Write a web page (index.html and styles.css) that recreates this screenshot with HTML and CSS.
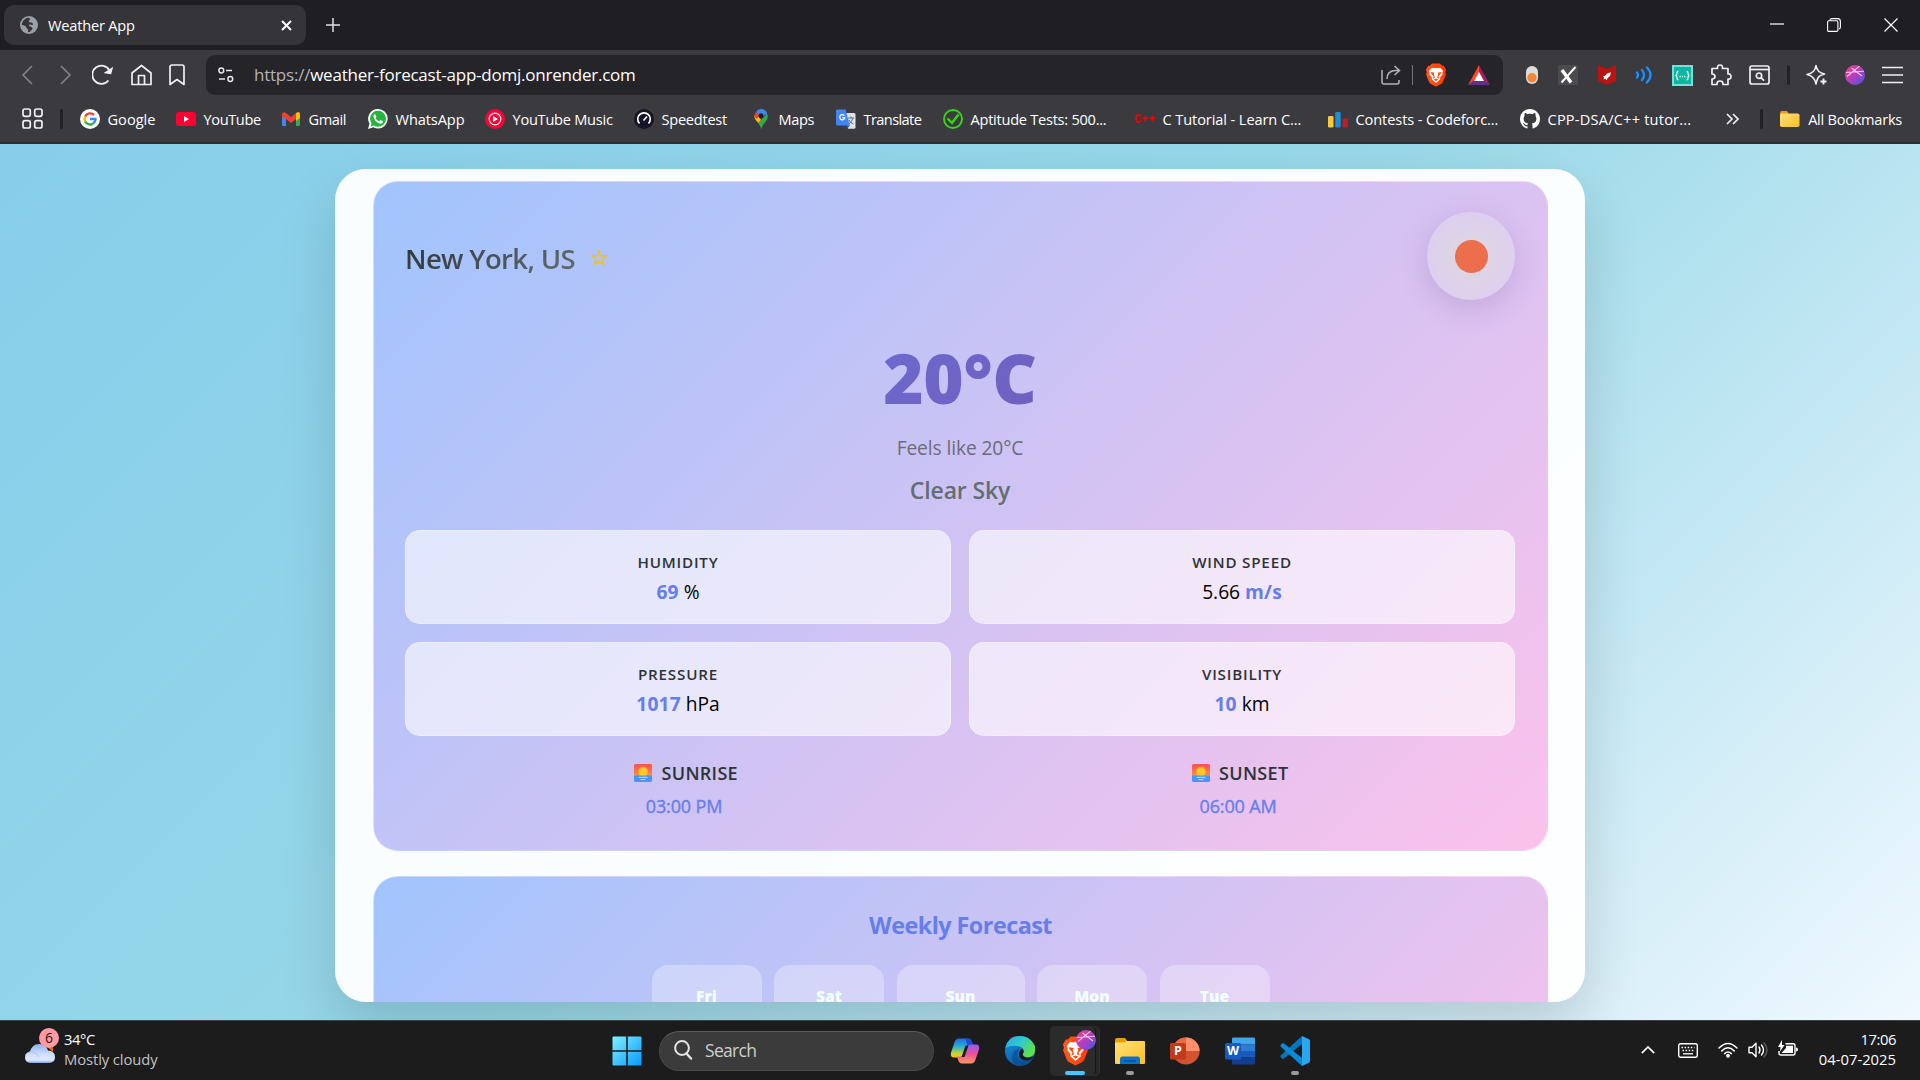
FILE: index.html
```html
<!DOCTYPE html>
<html lang="en">
<head>
<meta charset="utf-8">
<title>Weather App</title>
<link rel="stylesheet" href="styles.css">
</head>
<body>
<svg class="defs" width="0" height="0" aria-hidden="true">
  <defs>
    <linearGradient id="ball" x1="0" y1="0" x2="1" y2="1"><stop offset="0" stop-color="#f0407c"/><stop offset=".5" stop-color="#b43ec0"/><stop offset="1" stop-color="#3d5be0"/></linearGradient>
    <linearGradient id="lion-bg" x1="0" y1="0" x2="1" y2="0"><stop offset="0" stop-color="#ff5a1c"/><stop offset="1" stop-color="#ff3b06"/></linearGradient>
    <linearGradient id="win" x1="0" y1="0" x2="1" y2="1"><stop offset="0" stop-color="#7df3ff"/><stop offset="1" stop-color="#0a95ff"/></linearGradient>
    <linearGradient id="folder" x1="0" y1="0" x2="1" y2="1"><stop offset="0" stop-color="#ffe07a"/><stop offset="1" stop-color="#fcc021"/></linearGradient>
    <linearGradient id="cop1" x1="0" y1="0" x2="0" y2="1"><stop offset="0" stop-color="#1a6be8"/><stop offset=".45" stop-color="#2fb5c8"/><stop offset=".8" stop-color="#c8d42a"/><stop offset="1" stop-color="#ffc21a"/></linearGradient>
    <linearGradient id="cop2" x1="0" y1="0" x2="0" y2="1"><stop offset="0" stop-color="#8e5cf5"/><stop offset=".5" stop-color="#ee4f9c"/><stop offset="1" stop-color="#ff9a5c"/></linearGradient>
    <linearGradient id="edge1" x1="0" y1="0" x2="1" y2=".6"><stop offset="0" stop-color="#2aa8e6"/><stop offset=".5" stop-color="#30c9cf"/><stop offset="1" stop-color="#62e23e"/></linearGradient>
    <linearGradient id="edge2" x1="0" y1="0" x2=".6" y2="1"><stop offset="0" stop-color="#1795e0"/><stop offset="1" stop-color="#0d52a0"/></linearGradient>
    <linearGradient id="cloud" x1="0" y1="0" x2="0" y2="1"><stop offset="0" stop-color="#8fb2f0"/><stop offset=".55" stop-color="#cfe0fb"/><stop offset=".85" stop-color="#dce9fd"/><stop offset="1" stop-color="#7fa3e6"/></linearGradient>
    <linearGradient id="dawn" x1="0" y1="0" x2="0" y2="1"><stop offset="0" stop-color="#fb4f4f"/><stop offset=".6" stop-color="#f98a44"/></linearGradient>
    <symbol id="lion" viewBox="0 0 26 30">
      <path fill="url(#lion-bg)" d="M8 0h10l3 3h2l3 5-1 4 1 2-4 10q-1 2-3 3l-6 3-6-3q-2-1-3-3L0 14l1-2-1-4 3-5h2z"/>
      <path fill="#fff" d="M7.500 5.500l3 .7 2.500-.7 2.500.7 3-.7 3.700 4.300-1 2.700.3 1.500-3.300 4.500.3 2L13 25.500 7.500 20.500l.3-2L4.500 14l.3-1.500-1-2.700z"/>
      <path fill="#ff4c12" d="M6 11l5 1-.8 1.800 1.300 4.700-2.700 1.500 1-3.500-3-3zM20 11l-5 1 .8 1.800-1.300 4.700 2.700 1.500-1-3.500 3-3zM10.300 20.800L13 19.600l2.700 1.200L13 23z"/>
    </symbol>
    <symbol id="avatar" viewBox="0 0 20 20">
      <circle cx="10" cy="10" r="10" fill="url(#ball)"/>
      <path d="M0.800 7.500L19 6.300M2 11.500L14.500 1.200M6.500 3l10.500 8" stroke="#f6c3ea" stroke-width="1.100" fill="none"/>
    </symbol>
    <symbol id="sunrise" viewBox="0 0 18 18">
      <rect width="18" height="18" rx="1.800" fill="url(#dawn)"/>
      <path d="M9 2.200l1.100 1.100 1.500-.5.6 1.500 1.500.6-.3 1.600 1 1.300-.9 1.500.2 2H4.300l.2-2-.9-1.500 1-1.300-.3-1.600 1.500-.6.6-1.500 1.500.5z" fill="#ff9f2e"/>
      <circle cx="9" cy="8" r="4.400" fill="#ffc928"/>
      <path d="M0 11.500h18v4.700q0 1.800-1.800 1.800H1.800Q0 18 0 16.200z" fill="#4a93f8"/>
      <path d="M4.500 13.300h9M6.500 15.600h5" stroke="#dfe0ff" stroke-width=".9"/>
    </symbol>
  </defs>
</svg>

<header class="tabs">
  <div class="tab">
    <svg width="18" height="18" viewBox="0 0 18 18"><circle cx="9" cy="9" r="9" fill="#9aa0a6"/><path fill="#35343a" d="M8 1.800C4.500 2.500 2 5.500 1.800 9c1 .3 2.700.2 3.700 1.200 1 .9.700 2 1.700 2.500.8.500 1.300 1.200.8 3.200l2 .2c.3-1.600 2.500-1.800 2.500-3.600 0-1.500-2-1.700-3-2.200-.9-.5-.7-1.600.3-1.800 1.300-.3 1.600.9 2.700.5 1-.4.500-1.800-.5-2.300-.9-.4-2.600.2-3-.9C8.700 4.700 10 4.300 9.800 3 9.700 2.200 9 1.700 8 1.800z"/></svg>
    <span class="tab-title">Weather App</span>
    <svg width="11" height="11" viewBox="0 0 11 11"><path d="M1 1l9 9M10 1l-9 9" stroke="#fff" stroke-width="1.900"/></svg>
  </div>
  <svg class="new-tab" width="14" height="14" viewBox="0 0 14 14"><path d="M7 0v14M0 7h14" stroke="#dedee0" stroke-width="1.500"/></svg>
  <div class="window-buttons">
    <svg width="14" height="14" viewBox="0 0 14 14"><path d="M0 6h14" stroke="#fff" stroke-width="1.200"/></svg>
    <svg width="14" height="14" viewBox="0 0 14 14" fill="none" stroke="#fff" stroke-width="1.100"><rect x=".6" y="2.800" width="10.300" height="10.600" rx="1.200"/><path d="M3 2.600Q3 .6 5 .6h5.500q2.900 0 2.900 2.900V9q0 1.600-1.500 2"/></svg>
    <svg width="14" height="14" viewBox="0 0 14 14"><path d="M.5.5l13 13M13.500.5l-13 13" stroke="#fff" stroke-width="1.200"/></svg>
  </div>
</header>

<nav class="toolbar">
  <div class="nav-buttons">
    <svg width="20" height="22" viewBox="0 0 20 22" fill="none" stroke="#84838a" stroke-width="1.600"><path d="M13 2L4 11l9 9"/></svg>
    <svg width="20" height="22" viewBox="0 0 20 22" fill="none" stroke="#84838a" stroke-width="1.600"><path d="M5 2l9 9-9 9"/></svg>
    <svg width="22" height="22" viewBox="0 0 22 22" fill="none" stroke="#f0f0f2" stroke-width="1.800"><path d="M16.500 16.500A9.100 9.100 0 1 1 17.500 6.500"/><path d="M14 8.500l4.500.8 1.200-4.600z" fill="#f0f0f2"/></svg>
    <svg width="22" height="22" viewBox="1 0 22 22" fill="none" stroke="#f0f0f2" stroke-width="1.700" stroke-linejoin="round"><path d="M2 9l9.500-7.500L21 9v11.500H2z"/><path d="M8.500 20v-8.500h6V20"/></svg>
    <svg width="16" height="22" viewBox="0 0 16 22" fill="none" stroke="#f0f0f2" stroke-width="1.700" stroke-linejoin="round"><path d="M1 3q0-2 2-2h10q2 0 2 2v17.500l-7-5-7 5z"/></svg>
  </div>
  <div class="address">
    <svg width="16" height="16" viewBox="0 0 16 16" fill="none" stroke="#e8e8ea" stroke-width="1.500"><circle cx="3.300" cy="3.500" r="2.400"/><path d="M8 3.500h6M1 12h6"/><circle cx="12.300" cy="12" r="2.400"/></svg>
    <span class="url"><span class="scheme">https://</span>weather-forecast-app-domj.onrender.com</span>
    <svg class="share" width="20" height="20" viewBox="0 0 20 20" fill="none" stroke="#b4b4b8" stroke-width="1.500"><path d="M1 5v12q0 2 2 2h13q2 0 2-2v-2"/><path d="M6 14q0-8 8-8.500h4M13.500 1l5 4.500-5 4.500"/></svg>
    <i class="rule"></i>
    <svg class="shield" width="20" height="24"><use href="#lion"/></svg>
    <svg width="22" height="20" viewBox="0 0 22 20"><path fill="#ff4724" d="M11 0L0 20l11-7z"/><path fill="#9e1f63" d="M11 0l11 20-11-7z"/><path fill="#662d91" d="M0 20l6-5h10l6 5z"/><path fill="#fff" d="M11 7l5 9H6z"/></svg>
  </div>
  <div class="extensions">
    <svg width="12" height="18" viewBox="0 0 12 18"><rect width="12" height="18" rx="6" fill="#dcdcdc"/><circle cx="6" cy="11.800" r="4.700" fill="#f58634"/></svg>
    <svg width="20" height="20" viewBox="0 0 20 20"><rect width="20" height="20" fill="#4b4b4d"/><path d="M4 5l9 12.500" stroke="#fff" stroke-width="3.400"/><path d="M17.500 2L3.500 17.500" stroke="#fff" stroke-width="1.900"/></svg>
    <svg width="18" height="20" viewBox="0 0 18 20"><path fill="#b81414" d="M0 0l9 4 9-4v16l-9 4-9-4z"/><path fill="#fff" d="M13 7.500q-4 0-5.500 3l-2.500 1 1.200 1L5.500 14.500l2.200-.8 1 1.500 1-2.200q3-1.700 3.300-5.500z"/></svg>
    <svg width="17" height="20" viewBox="0 0 17 20" fill="none" stroke="#1a90ff" stroke-width="2.300" stroke-linecap="round"><path d="M2 7.500q2 2.500 0 5M7 5q4 5 0 10M12 2.500q7 7.500 0 15"/></svg>
    <svg width="21" height="21" viewBox="0 0 21 21"><rect x="1" y="1" width="19" height="19" fill="#0fb5a2" stroke="#6fe3d5" stroke-width="2"/><path d="M6.500 6q-1.500 0-1.500 2t-1 2.500q1 .5 1 2.500t1.500 2M14.500 6q1.500 0 1.500 2t1 2.500q-1 .5-1 2.500t-1.500 2" fill="none" stroke="#fff" stroke-width="1.200"/><path d="M7.500 11.500h1.200m1.200 0h1.200m1.200 0h1.200" stroke="#fff" stroke-width="1.300"/></svg>
    <svg width="22" height="22" viewBox="0 0 22 22" fill="none" stroke="#f0f0f2" stroke-width="1.700" stroke-linejoin="round"><path d="M2 4.500h5.500Q7 1 10 1t2.500 3.500H18V10q3-.5 3 2.500T18 15v5.500h-5q.3-3.500-3-3.500t-3 3.500H2V15q3 0 3-2.500T2 10z"/></svg>
    <svg width="21" height="20" viewBox="0 0 21 20" fill="none" stroke="#f0f0f2" stroke-width="1.700"><rect x="1" y="1" width="19" height="18" rx="2"/><path d="M1 4.500h19"/><circle cx="10" cy="10.700" r="2.700"/><path d="M12 12.700l3 3"/></svg>
    <i class="rule dark"></i>
    <svg width="22" height="22" viewBox="0 0 22 22" fill="none" stroke="#f0f0f2" stroke-width="1.600" stroke-linejoin="round"><path d="M10 1.500q1 7 8.500 8.500-5.500 1.500-6.500 4-1.200 2-2 6-1.500-8-9-9.500 8-1.500 9-9z"/><path d="M17.500 14.500v6M14.500 17.500h6" stroke-width="1.900"/></svg>
    <svg width="20" height="20"><use href="#avatar"/></svg>
    <svg width="21" height="18" viewBox="0 0 21 18"><path d="M0 1.500h21M0 9h21M0 16.500h21" stroke="#f0f0f2" stroke-width="1.600"/></svg>
  </div>
</nav>

<nav class="bookmarks">
  <svg class="apps" width="21" height="21" viewBox="0 0 21 21" fill="none" stroke="#f0f0f2" stroke-width="1.700"><rect x="1" y="1" width="7.300" height="7.300" rx="2"/><rect x="12.700" y="1" width="7.300" height="7.300" rx="2"/><rect x="1" y="12.700" width="7.300" height="7.300" rx="2"/><rect x="12.700" y="12.700" width="7.300" height="7.300" rx="2"/></svg>
  <i class="rule dark"></i>
  <div class="links">
    <a class="bm"><svg width="20" height="20" viewBox="0 0 20 20" fill="none" stroke-width="2.400"><circle cx="10" cy="10" r="10" fill="#fff"/><path stroke="#ea4335" d="M5.200 7.500a5.500 5.500 0 0 1 8.800-1.600"/><path stroke="#fbbc05" d="M5.200 12.500a5.500 5.500 0 0 1 0-5"/><path stroke="#34a853" d="M13.600 14.200a5.500 5.500 0 0 1-8.400-1.700"/><path stroke="#4285f4" d="M10 10h5.500q0 2.600-1.900 4.200"/></svg>Google</a>
    <a class="bm tight3"><svg width="20" height="20" viewBox="0 0 20 20"><rect y="3" width="20" height="14" rx="3" fill="#ff0033"/><path d="M8 7l5 3-5 3z" fill="#fff"/></svg>YouTube</a>
    <a class="bm tight3"><svg width="20" height="20" viewBox="0 0 20 20"><path fill="#4285f4" d="M1 5h4v12H2q-1 0-1-1z"/><path fill="#34a853" d="M15 9h4v7q0 1-1 1h-3z"/><path fill="#fbbc04" d="M15 4l2-1q2 0 2 2v4l-4 3z"/><path fill="#ea4335" d="M1 5q1-3 4-1l5 4 5-4v6l-5 4-5-4-4-2z"/></svg>Gmail</a>
    <a class="bm tight1"><svg width="20" height="20" viewBox="0 0 20 20"><path fill="#fff" d="M10 0a9.700 9.700 0 0 1 0 19.500q-2.500 0-4.500-1.200L0 20l1.500-5.400A9.700 9.700 0 0 1 10 0z"/><path fill="#25b53e" d="M10 1.800a8 8 0 0 1 0 16q-2.300 0-4.200-1.300l-3.200 1 .9-3.200A8 8 0 0 1 10 1.800z"/><path fill="#fff" d="M7 5q-1.800.8-1.500 2.700 1 5 6.500 7 2.300.3 3-1.700v-.8L12.500 11l-1.300 1.500Q8.800 11.600 7.500 9l.9-1.300z"/></svg>WhatsApp</a>
    <a class="bm tight2"><svg width="20" height="20" viewBox="0 0 20 20"><circle cx="10" cy="10" r="10" fill="#ff0033"/><circle cx="10" cy="10" r="5.800" fill="none" stroke="#fff" stroke-width="1.200"/><path d="M8 7l5 3-5 3z" fill="#fff"/></svg>YouTube Music</a>
    <a class="bm tight2"><svg width="20" height="20" viewBox="0 0 20 20"><circle cx="10" cy="10" r="10" fill="#141526"/><path d="M5.500 14.500a6.300 6.300 0 1 1 9 0" fill="none" stroke="#fff" stroke-width="1.700"/><path d="M9.500 11.500l3.500-4" stroke="#fff" stroke-width="1.600"/></svg>Speedtest</a>
    <a class="bm tight3"><svg width="20" height="20" viewBox="0 0 20 20"><path fill="#34a853" d="M10 20q-.7-3.500-2.800-6L16 4.500q2 4.500-1.500 8.500-3 3-4.500 7z"/><path fill="#fbbc04" d="M7.400 14Q3 10 3.300 6.500L7.800 8l2.200 2.800z"/><path fill="#ea4335" d="M3.400 6.500q.3-2 1.600-3.600L9 6 5.500 10q-2-2-2.100-3.500z"/><path fill="#4285f4" d="M5 2.900Q7-.2 10.500 0 14.800.3 16.200 4.600L11 8z"/><circle cx="10" cy="6.700" r="2.400" fill="#202124"/></svg>Maps</a>
    <a class="bm tight4"><svg width="20" height="20" viewBox="0 0 20 20"><path fill="#dfe2e6" d="M8 4h10q1.500 0 1.500 1.500v12.800q0 1.500-1.500 1.500h-6z"/><path d="M12 9h6m-3-1.500V9m2 0q-1 4-4.500 6m.5-4q1.500 3 4.500 4" stroke="#55707e" fill="none"/><path fill="#4285f4" d="M1.500.5h8l4.500 16H1.500Q0 16.500 0 15V2Q0 .5 1.500.5z"/><path d="M8.300 6.500a2.600 2.600 0 1 0 .6 2.200H6.500" stroke="#fff" stroke-width="1.200" fill="none"/><path fill="#2456b8" d="M10 16.500h4l-3 3.300z"/></svg>Translate</a>
    <a class="bm tight2"><svg width="20" height="20" viewBox="0 0 20 20" fill="none" stroke="#36d813"><circle cx="10" cy="10" r="9" stroke-width="1.900"/><path d="M4.500 9.500L9 14l6.500-8.500" stroke-width="2.400"/></svg>Aptitude Tests: 500...</a>
    <a class="bm tight1"><svg width="20" height="20" viewBox="0 0 20 20" fill="none" stroke="#f00505" stroke-width="1.600"><path d="M6 7.500Q5.500 5.800 3.500 5.800 1 5.800 1 9.500t2.500 3.600q2 0 2.500-1.600M7.500 9.300h5.500M10.200 6.300v6M14.500 9.300H20M17.200 6.300v6"/></svg>C Tutorial - Learn C...</a>
    <a class="bm tight1"><svg width="20" height="20" viewBox="0 0 20 20"><rect y="7" width="5.500" height="11.500" rx="1.300" fill="#f8c840"/><rect x="7.200" y="3" width="5.500" height="15.500" rx="1.300" fill="#1f8ed0"/><rect x="14.400" y="9.500" width="5.500" height="9" rx="1.300" fill="#b81f2a"/></svg>Contests - Codeforc...</a>
    <a class="bm wide"><svg width="20" height="20" viewBox="0 0 16 16"><path fill="#fff" d="M8 0C3.580 0 0 3.580 0 8c0 3.540 2.290 6.530 5.470 7.590.4.070.55-.17.55-.38 0-.19-.01-.82-.01-1.490-2.010.37-2.530-.49-2.690-.94-.09-.23-.48-.94-.82-1.130-.28-.15-.68-.52-.01-.53.630-.01 1.080.58 1.230.82.720 1.210 1.870.87 2.330.66.070-.52.280-.87.510-1.070-1.780-.2-3.640-.89-3.640-3.950 0-.87.310-1.590.82-2.150-.08-.2-.36-1.020.08-2.120 0 0 .67-.21 2.200.82.640-.18 1.320-.27 2-.27s1.360.09 2 .27c1.530-1.040 2.200-.82 2.200-.82.440 1.100.160 1.920.080 2.120.51.560.82 1.270.82 2.150 0 3.070-1.870 3.750-3.650 3.950.29.250.54.730.54 1.480 0 1.070-.01 1.930-.01 2.200 0 .21.150.46.550.38A8.010 8.010 0 0 0 16 8c0-4.420-3.580-8-8-8z"/></svg>CPP-DSA/C++ tutor...</a>
  </div>
  <svg width="13" height="12" viewBox="0 0 13 12" fill="none" stroke="#f0f0f2" stroke-width="1.700"><path d="M1 1l5 5-5 5M7 1l5 5-5 5"/></svg>
  <i class="rule dark late"></i>
  <a class="bm tight2"><svg width="20" height="20" viewBox="0 0 20 20"><path fill="#e0a21c" d="M0 4q0-2 2-2h5l2 3h9v5H0z"/><rect y="4.500" width="19.500" height="13.500" rx="1.800" fill="url(#folder)"/></svg>All Bookmarks</a>
</nav>

<main class="page">
  <div class="shell">
    <section class="card current">
      <div class="card-head">
        <h2 class="city">New York, US</h2>
        <svg class="star" width="18" height="18" viewBox="0 0 18 18" fill="none" stroke="#f1c40f" stroke-width="1.400"><path d="M9 1.800l1.800 5h5.300L12 10.200l1.500 5.300L9 12.300l-4.500 3.200L6 10.200 1.900 6.800h5.300z"/></svg>
        <div class="sun"><i class="sun-disc"></i></div>
      </div>
      <div class="temp">20°C</div>
      <div class="feels">Feels like 20°C</div>
      <div class="sky">Clear Sky</div>
      <div class="stats">
        <div class="stat"><div class="label">HUMIDITY</div><div class="value"><b>69</b> %</div></div>
        <div class="stat"><div class="label">WIND SPEED</div><div class="value">5.66 <b>m/s</b></div></div>
        <div class="stat"><div class="label">PRESSURE</div><div class="value"><b>1017</b> hPa</div></div>
        <div class="stat"><div class="label">VISIBILITY</div><div class="value"><b>10</b> km</div></div>
      </div>
      <div class="suns">
        <div><div class="sun-label"><svg width="18" height="18"><use href="#sunrise"/></svg>SUNRISE</div><div class="sun-time">03:00 PM</div></div>
        <div><div class="sun-label"><svg width="18" height="18"><use href="#sunrise"/></svg>SUNSET</div><div class="sun-time">06:00 AM</div></div>
      </div>
    </section>
    <section class="card week">
      <h3 class="week-title">Weekly Forecast</h3>
      <div class="days">
        <div class="day">Fri</div><div class="day">Sat</div><div class="day broad">Sun</div><div class="day">Mon</div><div class="day">Tue</div>
      </div>
    </section>
  </div>
</main>

<footer class="taskbar">
  <div class="weather-widget">
    <div class="widget-icon">
      <svg width="32" height="22" viewBox="0 0 32 22"><path d="M22 3h7v6z" fill="#f7630c"/><path d="M8 20q-7 0-7-5.500Q1 9.500 6 9q2-8.500 10-8 6 .5 8 6.500 7 .5 7 6.500 0 6-7 6z" fill="url(#cloud)"/><path d="M1.500 12Q5 7 10 9.500q4 2 5 4" fill="none" stroke="#a9c3f3" stroke-width="1"/></svg>
      <span class="count">6</span>
    </div>
    <div class="two-lines"><span class="line-a">34°C</span><span class="line-b">Mostly cloudy</span></div>
  </div>
  <div class="dock">
    <svg class="start" width="30" height="30" viewBox="0 0 30 30" fill="url(#win)"><path d="M1.500.500H14.200V14.200H.500V1.500q0-1 1-1zM15.800.500H28.500q1 0 1 1V14.200H15.800zM.500 15.800H14.200V29.500H1.500q-1 0-1-1zM15.800 15.800H29.500V28.500q0 1-1 1H15.800z"/></svg>
    <div class="search"><svg width="19" height="20" viewBox="0 0 19 20" fill="none" stroke="#e4e4e4" stroke-width="2"><circle cx="8" cy="8" r="6.900"/><path d="M12.500 13.500l4.500 5" stroke-width="2.400" stroke-linecap="round"/></svg>Search</div>
    <div class="app"><svg width="30" height="28" viewBox="0 0 30 28"><path fill="url(#cop1)" d="M9 1.500h9q3 0 4 4l1 3h-5q-2 0-3 3l-2 6q-1 3-4 3H4q-4 0-3-5L4.500 5.500q1-4 4.500-4z"/><path fill="#2048d8" d="M15.500 1.500H18q3 0 4 4l1 3h-5q-1.500-1-2.500-7z"/><path fill="url(#cop2)" d="M21 26.500h-9q-3 0-4-4l-1-3h5q2 0 3-3l2-6q1-3 4-3h5q4 0 3 5l-3.500 10q-1 4-4.500 4z"/><path fill="#1c1c1c" d="M15.500 8.500h3L14.500 20h-3z"/></svg></div>
    <div class="app"><svg width="30" height="30" viewBox="0 0 30 30"><circle cx="15" cy="15" r="15" fill="url(#edge2)"/><path fill="url(#edge1)" d="M.300 12Q2.500 0 15 0q8 0 12.500 6T30 15q-.5 5-5.500 6t-6.500-2q-1-1.500 0-3 1.500-3-2-5Q8 8 .300 12z"/><path fill="#1c1c1c" d="M17.500 19q2 3.500 7.500 2.500l4-1q-3 4.500-9 4-7-1.500-6-7.500.7-3 3.500-4.500 2 2.500 1 4.500-.8 1-1 2z"/><path fill="#0b4c92" opacity=".65" d="M12.500 18q-1 7 7.500 7.500 4 0 7-2-4 6.500-12 6.500-8-2-8-9 0-7 8-8.500-2.300 2.500-2.500 5.500z"/></svg></div>
    <div class="app brave"><svg width="25" height="30"><use href="#lion"/></svg><svg class="badge" width="20" height="20"><use href="#avatar"/></svg><i class="mark on"></i></div>
    <div class="app"><svg width="30" height="28" viewBox="0 0 30 28"><path fill="#e6a100" d="M0 3q0-2 2-2h8l3 4v3H0z"/><rect y="4" width="30" height="23" rx="1" fill="url(#folder)"/><path fill="#e6a100" d="M0 5.500V3h12l-2 2.500z"/><path fill="#0f6fc4" d="M5 27v-5q0-2.500 2.500-2.500h15q2.500 0 2.500 2.500v5z"/><path d="M9 24h12" stroke="#0a4c94" stroke-width="1.400"/></svg><i class="mark"></i></div>
    <div class="app"><svg width="30" height="28" viewBox="0 0 30 28"><circle cx="16" cy="14" r="13.600" fill="#d35230"/><path fill="#ff8f6b" d="M16 .400A13.600 13.600 0 0 1 29.600 14H16z"/><path fill="#ed6c47" d="M16 .400A13.600 13.600 0 0 0 2.400 14H16z"/><rect y="6" width="16" height="16.500" rx="1.500" fill="#c13b1b"/></svg><span class="letter">P</span></div>
    <div class="app"><svg width="30" height="28" viewBox="0 0 30 28"><path fill="#41a5ee" d="M7 1.500Q7 .5 8 .5h21q1 0 1 1V7.500H7z"/><path fill="#2b7cd3" d="M7 7.500h23V14H7z"/><path fill="#185abd" d="M7 14h23v6.500H7z"/><path fill="#103f91" d="M7 20.500h23v6q0 1-1 1H8q-1 0-1-1z"/><rect y="6" width="16" height="16.500" rx="1.500" fill="#185abd"/></svg><span class="letter">W</span></div>
    <div class="app"><svg width="30" height="30" viewBox="0 0 30 30"><path fill="#0076bd" d="M.500 19.500L22 0v8L4 22.500q-1 .8-2 0L.500 21z"/><path fill="#0a8ad6" d="M.500 10.500L22 30v-8L4 7.500q-1-.8-2 0L.500 9z"/><path fill="#28a8f4" d="M22 0l7 3.200q1 .5 1 1.800v20q0 1.300-1 1.800L22 30z"/></svg><i class="mark"></i></div>
  </div>
  <div class="tray">
    <svg width="14" height="8" viewBox="0 0 14 8" fill="none" stroke="#fff" stroke-width="1.700"><path d="M.8 7.200L7 1l6.200 6.200"/></svg>
    <svg class="kbd" width="20" height="15" viewBox="0 0 20 15" fill="none" stroke="#fff"><rect x=".7" y=".7" width="18.600" height="13.600" rx="2" stroke-width="1.400"/><path d="M3.500 4.500h13M4.500 7.500h11" stroke-width="1.500" stroke-dasharray="1.500 1.600"/><path d="M5 10.800h10" stroke-width="1.300"/></svg>
    <svg class="wifi" width="20" height="16" viewBox="0 0 20 16" fill="none" stroke="#fff" stroke-width="1.500" stroke-linecap="round"><path d="M1 6q9-9 18 0M3.800 8.900q6.200-6.200 12.400 0M6.600 11.600q3.400-3.300 6.800 0"/><circle cx="10" cy="13.800" r="1.200" fill="#fff"/></svg>
    <svg class="vol" width="20" height="18" viewBox="0 0 20 18" fill="none" stroke="#fff" stroke-width="1.400" stroke-linejoin="round" stroke-linecap="round"><path d="M1 6.300h3l4-4v13.400l-4-4H1z"/><path d="M11 6q2 3 0 6M13.500 4q4 5 0 10"/><path d="M16 2q6 7 0 14" stroke="#5c5c5c"/></svg>
    <svg class="bat" width="20" height="17" viewBox="0 0 20 17"><path d="M7.500 3.800H15q2 0 2 2V13q0 2-2 2H3q-2 0-2-2v-2" fill="none" stroke="#fff" stroke-width="1.400"/><path d="M8 5.800h7V13H3.500L8 8z" fill="#fff"/><path d="M18 7.500q2 0 2 2t-2 2z" fill="#fff"/><path d="M4 0L0 7h2.500L2 11.500 6.500 5H4z" fill="#fff"/></svg>
    <div class="two-lines clock"><span class="line-a">17:06</span><span>04-07-2025</span></div>
  </div>
</footer>
</body>
</html>
```
FILE: styles.css
```css
* { box-sizing: border-box; }

body {
  margin: 0;
  width: 1920px;
  height: 1080px;
  overflow: hidden;
  display: flex;
  flex-direction: column;
  font-family: "Open Sans", "Noto Sans", sans-serif;
  color: #fff;
}

svg { display: block; flex: none; }
.defs { position: absolute; }
h2, h3 { margin: 0; }

/* Browser chrome */
.tabs {
  height: 50px;
  flex: none;
  background: #1f1e23;
  display: flex;
  align-items: center;
  padding: 0 17px 0 4px;
}
.tab {
  width: 302px;
  height: 40px;
  border-radius: 10px;
  background: #353439;
  display: flex;
  align-items: center;
  padding: 0 14px 0 16px;
}
.tab-title {
  flex: 1;
  margin-left: 10px;
  font-size: 14.6px;
  letter-spacing: -0.2px;
}
.new-tab { margin: 0 auto 0 20px; }
.window-buttons { display: flex; gap: 43px; margin-right: 5px; }

.toolbar {
  height: 50px;
  flex: none;
  background: #3b3a3f;
  display: flex;
  align-items: center;
}
.nav-buttons {
  width: 206px;
  padding-left: 19px;
  display: flex;
  align-items: center;
  justify-content: space-between;
  padding-right: 21px;
}
.address {
  width: 1297px;
  height: 40px;
  border-radius: 9px;
  background: #252429;
  display: flex;
  align-items: center;
  padding: 0 13px 0 12px;
}
.url {
  flex: 1;
  margin-left: 20px;
  font-size: 17px;
  letter-spacing: -0.23px;
  line-height: 40px;
}
.scheme { color: #b3b3b8; }
.rule { width: 1px; height: 20px; background: #77767b; margin: 0 13px 0 11px; flex: none; }
.rule.dark { width: 3px; border-radius: 2px; background: #222126; margin: 0; }
.shield { margin-right: 22px; }
.extensions {
  flex: 1;
  display: flex;
  align-items: center;
  justify-content: space-between;
  padding: 0 17px 0 23px;
}
.extensions svg:nth-child(-n+4) { margin-right: 3px; }

.bookmarks {
  height: 44px;
  flex: none;
  background: #3b3a3f;
  border-bottom: 2px solid #302f34;
  display: flex;
  align-items: center;
  padding: 0 18px 5px 22px;
}
.bookmarks .rule { margin: 0 17px 0 17px; }
.bookmarks .late { margin: 0 17px 0 21px; }
.links {
  width: 1648px;
  display: grid;
  grid-template-columns: 96px 105px 87px 117px 149px 117px 85px 107px 192px 193px 192px 1fr;
}
.bm {
  display: flex;
  align-items: center;
  gap: 8px;
  font-size: 14.6px;
  line-height: 22px;
  white-space: nowrap;
}
.links .bm { gap: 7.500px; }
.wide { letter-spacing: 0.2px; }
.tight1 { letter-spacing: -0.1px; }
.tight2 { letter-spacing: -0.26px; }
.tight3 { letter-spacing: -0.4px; }
.tight4 { letter-spacing: -0.6px; }

/* Weather page */
.page {
  height: 876px;
  flex: none;
  padding-top: 25px;
  background: linear-gradient(135deg, #87ceeb 0%, #98d8e8 50%, #f0f8ff 100%);
}
.shell {
  width: 1250px;
  height: 833px;
  margin: 0 auto;
  padding: 12px 37px 0 38px;
  border-radius: 31px;
  overflow: hidden;
  background: rgba(255, 255, 255, 0.95);
  box-shadow: 0 25px 56px rgba(0, 0, 0, 0.15);
}
.card {
  border: 1px solid rgba(255, 255, 255, 0.3);
  border-radius: 25px;
  background: linear-gradient(135deg, #a1c4fd 0%, #fbc2eb 100%);
}
.current { height: 670px; padding: 30px 32px 0 31px; text-align: center; }
.card-head { display: flex; align-items: center; height: 88px; }
.city {
  font-size: 27.500px;
  font-weight: 600;
  line-height: 40px;
  letter-spacing: -0.65px;
  padding-top: 6px;
  background: linear-gradient(135deg, #2d3436, #636e72);
  background-clip: text;
  -webkit-background-clip: text;
  color: transparent;
}
.star { margin: 4px auto 0 15px; }
.sun {
  width: 88px;
  height: 88px;
  border-radius: 50%;
  display: grid;
  place-items: center;
  background: radial-gradient(circle, rgba(222, 222, 216, 0.8) 0%, rgba(226, 222, 236, 0.45) 70%);
  box-shadow: 0 8px 30px rgba(80, 50, 120, 0.18);
}
.sun-disc { width: 33px; height: 33px; border-radius: 50%; background: #ec6e4c; }
.temp {
  margin-top: 42px;
  font-size: 69px;
  line-height: 70px;
  font-weight: 800;
  letter-spacing: -0.3px;
  background: linear-gradient(135deg, #667eea, #764ba2);
  background-clip: text;
  -webkit-background-clip: text;
  color: transparent;
}
.feels { margin-top: 24px; font-size: 19.2px; line-height: 24px; letter-spacing: -0.1px; color: #6d6b7a; }
.sky { margin-top: 16px; font-size: 23px; line-height: 28px; font-weight: 600; letter-spacing: -0.15px; color: #636e72; }
.stats {
  margin-top: 26px;
  display: grid;
  grid-template-columns: 1fr 1fr;
  grid-auto-rows: 94px;
  gap: 18px;
}
.stat {
  padding-top: 21px;
  border: 1px solid rgba(255, 255, 255, 0.3);
  border-radius: 15px;
  background: rgba(255, 255, 255, 0.6);
}
.label { font-size: 15.2px; line-height: 20px; font-weight: 600; letter-spacing: 0.8px; color: #2d3436; }
.value { margin-top: 6.500px; font-size: 19.2px; line-height: 26px; color: #000; }
.value b { color: #667eea; letter-spacing: 0.15px; }
.suns { margin-top: 26px; display: grid; grid-template-columns: 1fr 1fr; padding-left: 2px; }
.sun-label {
  display: flex;
  justify-content: center;
  align-items: center;
  gap: 9.500px;
  padding-left: 4px;
  font-size: 18px;
  line-height: 22px;
  font-weight: 600;
  letter-spacing: 0.3px;
  color: #2d3436;
}
.sun-time {
  margin-top: 11px;
  font-size: 18px;
  line-height: 22px;
  font-weight: 500;
  letter-spacing: -0.15px;
  color: #667eea;
  -webkit-text-stroke: 0.35px #667eea;
}
.week { margin-top: 25px; height: 350px; padding-top: 34px; text-align: center; }
.week-title { font-size: 23.4px; line-height: 28px; font-weight: 700; letter-spacing: -0.54px; color: #667eea; }
.days { display: flex; justify-content: center; gap: 12.500px; margin-top: 26px; }
.day {
  width: 110px;
  height: 180px;
  padding-top: 20px;
  border-radius: 16px;
  background: rgba(255, 255, 255, 0.3);
  font-size: 15.6px;
  line-height: 22px;
  font-weight: 800;
  color: #f0ffff;
}
.broad { width: 128px; }

/* Taskbar */
.taskbar {
  height: 60px;
  flex: none;
  background: #1c1c1c;
  border-top: 1px solid #414243;
  display: grid;
  grid-template-columns: 612px 1fr 279px;
  align-items: center;
}
.weather-widget { display: flex; align-items: center; padding-left: 24px; }
.widget-icon { position: relative; width: 40px; height: 40px; padding-top: 12px; }
.count {
  position: absolute;
  left: 15px;
  top: -3px;
  width: 20px;
  height: 20px;
  border-radius: 50%;
  background: #ff99a4;
  color: #1c1c1c;
  font-size: 14px;
  line-height: 20px;
  text-align: center;
}
.two-lines { display: flex; flex-direction: column; font-size: 14.8px; line-height: 20px; padding-bottom: 3px; }
.line-a { letter-spacing: -0.45px; }
.line-b { color: #c2c2c2; letter-spacing: -0.1px; }
.dock { display: flex; align-items: center; height: 59px; }
.search {
  width: 275px;
  height: 40px;
  margin: 0 6px 0 17px;
  padding: 0 0 2px 14px;
  border: 1px solid #484848;
  border-top-color: #5c5c5c;
  border-radius: 20px;
  background: #3b3b3b;
  display: flex;
  align-items: center;
  gap: 12px;
  font-size: 17.5px;
  letter-spacing: -0.7px;
  color: #cfcfcf;
}
.app {
  position: relative;
  width: 50px;
  height: 50px;
  margin-right: 5px;
  display: grid;
  place-items: center;
}
/* two open windows: a second tile edge shows behind the first */
.brave {
  border-radius: 5px;
  background: #262626;
  border: 1px solid #323232;
}
.brave::before {
  content: "";
  position: absolute;
  left: -1px;
  top: -1px;
  width: 45px;
  height: 50px;
  border-radius: 5px;
  background: #2b2b2b;
  border-right: 1px solid #161616;
}
.brave svg { position: relative; }
.brave .badge { position: absolute; left: 25px; top: 3px; }
.mark { position: absolute; left: 21px; bottom: 1px; width: 8px; height: 4px; border-radius: 2px; background: #9a9a9a; }
.mark.on { left: 14px; bottom: 0; width: 20px; background: #4cc2ff; }
.letter {
  position: absolute;
  left: 10px;
  top: 11px;
  width: 16px;
  font-size: 12.500px;
  line-height: 28px;
  font-weight: 700;
  text-align: center;
}
.tray { display: flex; align-items: center; padding-bottom: 1px; }
.kbd { margin-left: 23px; }
.wifi { margin-left: 20px; }
.vol { margin-left: 10px; }
.bat { margin-left: 10px; margin-bottom: 3px; }
.clock { margin-left: auto; padding-right: 24px; padding-bottom: 2px; align-items: flex-end; }
```
